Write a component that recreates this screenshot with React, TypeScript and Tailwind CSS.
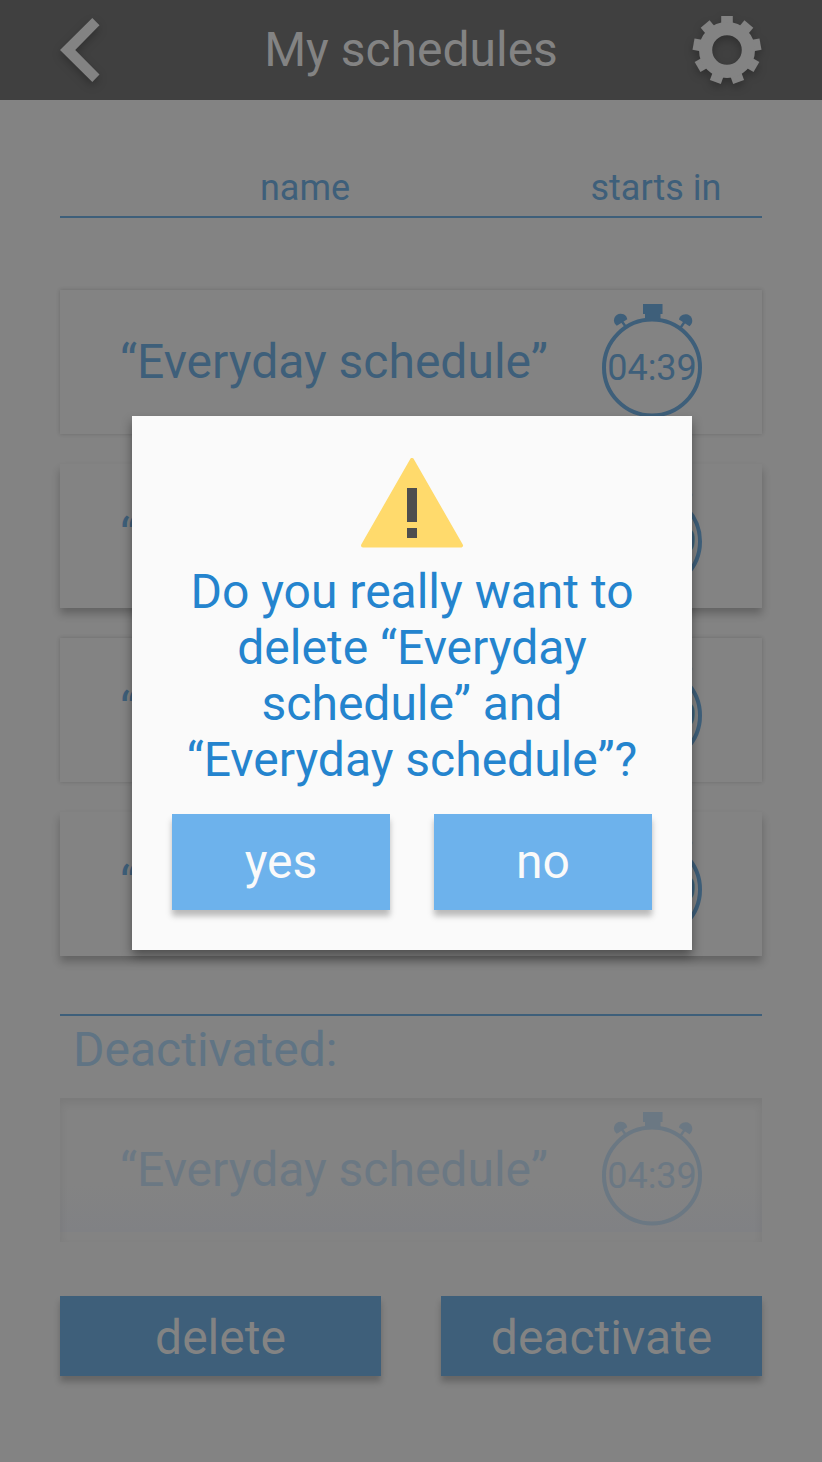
const RAISED = "shadow-[0_6px_8px_rgba(0,0,0,0.24)]";
const OUTLINED = "shadow-[0_0_4px_rgba(0,0,0,0.18)]";

function Gear() {
  return (
    <svg viewBox="0 0 70 70" className="h-[70px] w-[70px] overflow-visible drop-shadow-[0_4px_4px_rgba(0,0,0,0.25)]">
      <g fill="#838383">
        {[0, 40, 80, 120, 160, 200, 240, 280, 320].map((angle) => (
          <path key={angle} d="M29.200 1h11.600v12h-11.600z" transform={`rotate(${angle} 35 35)`} />
        ))}
      </g>
      <circle cx="35" cy="35" r="21.4" fill="none" stroke="#838383" strokeWidth="13.2" />
    </svg>
  );
}

function Timer({ time }: { time: string }) {
  return (
    <svg viewBox="600 302 104 118" className="h-[118px] w-[104px] shrink-0" fill="currentColor">
      <circle cx="652" cy="367.5" r="48" fill="none" stroke="currentColor" strokeWidth="4" />
      <path d="M643 304h19.500v10h-2v6h-15.500v-6h-2z" />
      <path d="M616.800 325.800A6.700 6.700 0 1 1 627.300 319.300z" />
      <path d="M679 319.500A6.700 6.700 0 1 1 689.500 326.300z" />
      <path d="M622 321.500 627 328.500M684.500 322 680 328.500" fill="none" stroke="currentColor" strokeWidth="2.4" />
      <text x="652" y="380" textAnchor="middle" fontSize="36" fontFamily="Roboto, sans-serif">
        {time}
      </text>
    </svg>
  );
}

function Schedule({ className }: { className: string }) {
  return (
    <div className={`flex h-36 shrink-0 items-center pr-[58px] pl-[60px] ${className}`}>
      <span className="flex-1 text-5xl leading-[56px] whitespace-nowrap">“Everyday schedule”</span>
      <div className="-mt-[2px]">
        <Timer time="04:39" />
      </div>
    </div>
  );
}

function DialogButton({ label }: { label: string }) {
  return (
    <button className="h-24 w-[218px] bg-[#6db2ec] text-5xl text-[#fafafa] shadow-[0_6px_6px_rgba(0,0,0,0.26)]">
      {label}
    </button>
  );
}

export default function App() {
  return (
    <div className="relative flex h-[1462px] w-[822px] flex-col overflow-hidden bg-[#838383] font-['Roboto',sans-serif] text-[#3e5f7a]">
      <header className="flex h-[100px] shrink-0 items-center justify-between bg-[#404040] px-[60px] text-[#838383]">
        <svg viewBox="0 0 40 64" className="h-16 w-[70px] overflow-visible drop-shadow-[0_4px_4px_rgba(0,0,0,0.25)]" preserveAspectRatio="xMinYMid meet">
          <path d="M32.300 0 39.500 7.200 15.200 32 39.500 56.500 32.300 64 0 32z" fill="currentColor" />
        </svg>
        <h1 className="text-5xl leading-[56px]">My schedules</h1>
        <Gear />
      </header>
      <main className="flex flex-1 flex-col px-[60px]">
        <div className="mt-[66px] flex h-[52px] shrink-0 border-b-2 border-[#3e5f7a] text-4xl leading-[44px]">
          <span className="w-[490px] text-center">name</span>
          <span className="flex-1 text-center whitespace-nowrap">starts in</span>
        </div>
        <div className="mt-[72px] flex flex-col gap-[30px]">
          <Schedule className={OUTLINED} />
          <Schedule className={RAISED} />
          <Schedule className={OUTLINED} />
          <Schedule className={RAISED} />
        </div>
        <section className="mt-[58px] border-t-2 border-[#3e5f7a]">
          <h2 className="pt-[6px] pl-[13px] text-5xl leading-[56px] text-[#607484]">Deactivated:</h2>
          <Schedule className="mt-5 bg-[linear-gradient(#838383_60%,#808184_93%,#838383_93%)] text-[#6b7883] shadow-[inset_0_5px_8px_rgba(0,0,0,0.07)]" />
        </section>
        <div className="mt-[54px] flex justify-between text-5xl text-[#838383]">
          <button className="h-20 w-[321px] bg-[#3e5f7a] pt-[3px] shadow-[0_6px_6px_rgba(0,0,0,0.22)]">delete</button>
          <button className="h-20 w-[321px] bg-[#3e5f7a] pt-[3px] shadow-[0_6px_6px_rgba(0,0,0,0.22)]">deactivate</button>
        </div>
      </main>
      <div role="alertdialog" className="absolute top-[416px] left-[132px] flex h-[534px] w-[560px] flex-col items-center bg-[#fafafa] px-10 pt-[42px] text-[#2484ce] shadow-[0_6px_10px_rgba(0,0,0,0.4)]">
        <svg viewBox="0 0 104 90" className="h-[90px] w-[104px] shrink-0">
          <path d="M52 2 101 87.500H3z" fill="#ffda6c" stroke="#ffda6c" strokeWidth="4" strokeLinejoin="round" />
          <path d="M47 30h10v34H47zM47 70h10v10H47z" fill="#4e4e4e" />
        </svg>
        <p className="mt-4 text-center text-5xl leading-[56px] whitespace-nowrap">
          Do you really want to
          <br />
          delete “Everyday
          <br />
          schedule” and
          <br />
          “Everyday schedule”?
        </p>
        <div className="mt-[26px] flex w-full justify-between">
          <DialogButton label="yes" />
          <DialogButton label="no" />
        </div>
      </div>
    </div>
  );
}
